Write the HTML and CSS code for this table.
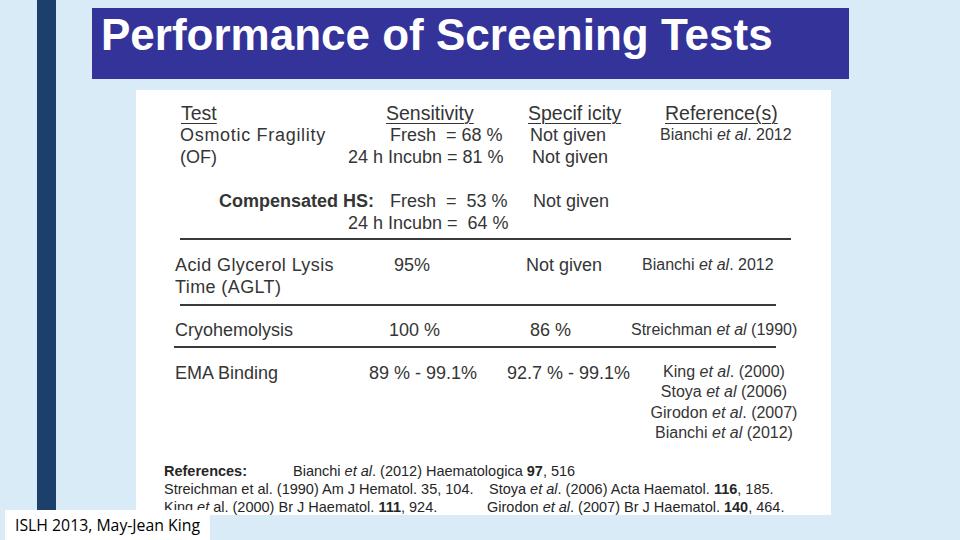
FILE: index.html
```html
<!DOCTYPE html>
<html lang="en">
<head>
<meta charset="utf-8">
<title>Performance of Screening Tests</title>
<link rel="stylesheet" href="styles.css">
</head>
<body>
<div class="slide">
  <div class="rail"></div>
  <div class="main">
    <h1 class="title">Performance of Screening Tests</h1>
    <div class="panel">
      <div class="table">
        <div class="hd pl-7">Test</div>
        <div class="hd pl-46">Sensitivity</div>
        <div class="hd pl-23">Specif icity</div>
        <div class="hd pl-37">Reference(s)</div>

        <div class="wide pl-6">Osmotic Fragility</div>
        <div class="pl-50">Fresh &nbsp;= 68 %</div>
        <div class="pl-25">Not given</div>
        <div class="ref pl-32">Bianchi <i>et al</i>. 2012</div>

        <div class="pl-6">(OF)</div>
        <div class="pl-8">24 h Incubn = 81 %</div>
        <div class="pl-27">Not given</div>
        <div></div>

        <div class="spacer"></div>

        <div class="strong pl-45">Compensated HS:</div>
        <div class="pl-50">Fresh &nbsp;= &nbsp;53 %</div>
        <div class="pl-28">Not given</div>
        <div></div>

        <div></div>
        <div class="pl-8">24 h Incubn = &nbsp;64 %</div>
        <div></div>
        <div></div>

        <div class="rule rule-a"></div>

        <div class="wide-s pl-1">Acid Glycerol Lysis<br>Time (AGLT)</div>
        <div class="pl-54">95%</div>
        <div class="pl-21">Not given</div>
        <div class="ref pl-14">Bianchi <i>et al</i>. 2012</div>

        <div class="rule rule-b"></div>

        <div class="pl-1">Cryohemolysis</div>
        <div class="pl-49">100 %</div>
        <div class="pl-25">86 %</div>
        <div class="ref pl-3">Streichman <i>et al</i> (1990)</div>

        <div class="rule rule-c"></div>

        <div class="pl-1">EMA Binding</div>
        <div class="pl-29">89 % - 99.1%</div>
        <div class="pl-2">92.7 % - 99.1%</div>
        <div class="ref stack">
          <div>King <i>et al</i>. (2000)</div>
          <div>Stoya <i>et al</i> (2006)</div>
          <div>Girodon <i>et al</i>. (2007)</div>
          <div>Bianchi <i>et al</i> (2012)</div>
        </div>
      </div>

      <div class="refs">
        <div class="refs-head">
          <b class="refs-label">References:</b>
          <span>Bianchi <i>et al</i>. (2012) Haematologica <b>97</b>, 516</span>
        </div>
        <div class="refs-grid">
          <span>Streichman et al. (1990) Am J Hematol. 35, 104.</span>
          <span>Stoya <i>et al</i>. (2006) Acta Haematol. <b>116</b>, 185.</span>
          <span>King <i>et</i> al. (2000) Br J Haematol. <b>111</b>, 924.</span>
          <span class="nudge">Girodon <i>et al</i>. (2007) Br J Haematol. <b>140</b>, 464.</span>
        </div>
      </div>
    </div>
  </div>
  <div class="credit">ISLH 2013, May-Jean King</div>
</div>
</body>
</html>
```

FILE: styles.css
```css
html, body {
  margin: 0;
  padding: 0;
}

body {
  width: 960px;
  height: 540px;
  overflow: hidden;
  background: #d8ebf6;
  font-family: "Liberation Sans", Arial, sans-serif;
}

.slide {
  position: relative;
  display: flex;
  height: 540px;
}

.rail {
  flex: none;
  width: 19px;
  margin-left: 37px;
  background: #1c3f6c;
}

.main {
  display: flex;
  flex-direction: column;
  margin-left: 36px;
}

.title {
  box-sizing: border-box;
  width: 757px;
  height: 71px;
  margin: 8px 0 0;
  padding: 2px 0 0 9px;
  background: #343399;
  color: #ffffff;
  font-size: 44px;
  font-weight: bold;
  line-height: 49px;
  white-space: nowrap;
}

.panel {
  box-sizing: border-box;
  width: 695px;
  height: 425px;
  margin: 11px 0 0 44px;
  padding-top: 12px;
  background: #ffffff;
  color: #353535;
}

.table {
  display: grid;
  grid-template-columns: 166px 165px 123px 192px;
  margin-left: 38px;
  font-size: 18px;
  line-height: 22px;
  white-space: nowrap;
}

.hd {
  font-size: 19.5px;
  text-decoration: underline;
  text-decoration-thickness: 1px;
  text-underline-offset: 3px;
}

.wide {
  letter-spacing: 0.7px;
}

.wide-s {
  letter-spacing: 0.4px;
}

.ref {
  font-size: 16px;
}

.strong {
  font-weight: bold;
}

.spacer {
  grid-column: 1 / -1;
  height: 22px;
}

.rule {
  grid-column: 1 / -1;
  height: 2px;
  background: #3a3a3a;
}

.rule-a {
  width: 611px;
  margin: 4px 0 14px 6px;
}

.rule-b {
  width: 596px;
  margin: 6px 0 13px 6px;
}

.rule-c {
  width: 602px;
  margin: 5px 0 14px 0;
}

.stack {
  text-align: center;
  line-height: 20.4px;
}

.pl-1 { padding-left: 1px; }
.pl-2 { padding-left: 2px; }
.pl-3 { padding-left: 3px; }
.pl-6 { padding-left: 6px; }
.pl-7 { padding-left: 7px; }
.pl-8 { padding-left: 8px; }
.pl-14 { padding-left: 14px; }
.pl-21 { padding-left: 21px; }
.pl-23 { padding-left: 23px; }
.pl-25 { padding-left: 25px; }
.pl-27 { padding-left: 27px; }
.pl-28 { padding-left: 28px; }
.pl-29 { padding-left: 29px; }
.pl-32 { padding-left: 32px; }
.pl-37 { padding-left: 37px; }
.pl-45 { padding-left: 45px; }
.pl-46 { padding-left: 46px; }
.pl-49 { padding-left: 49px; }
.pl-50 { padding-left: 50px; }
.pl-54 { padding-left: 54px; }

.refs {
  margin: 18px 0 0 28px;
  font-size: 14.5px;
  line-height: 18px;
  color: #262626;
  white-space: nowrap;
}

.refs-head {
  display: flex;
}

.refs-label {
  width: 129px;
}

.refs-grid {
  display: grid;
  grid-template-columns: 325px auto;
}

.nudge {
  margin-left: -2px;
}

.credit {
  position: absolute;
  left: 5px;
  top: 510px;
  box-sizing: border-box;
  width: 205px;
  height: 30px;
  padding-left: 10px;
  background: #ffffff;
  color: #000000;
  font-family: "Open Sans", "Noto Sans", sans-serif;
  font-size: 15.8px;
  line-height: 30px;
  white-space: nowrap;
}
```
